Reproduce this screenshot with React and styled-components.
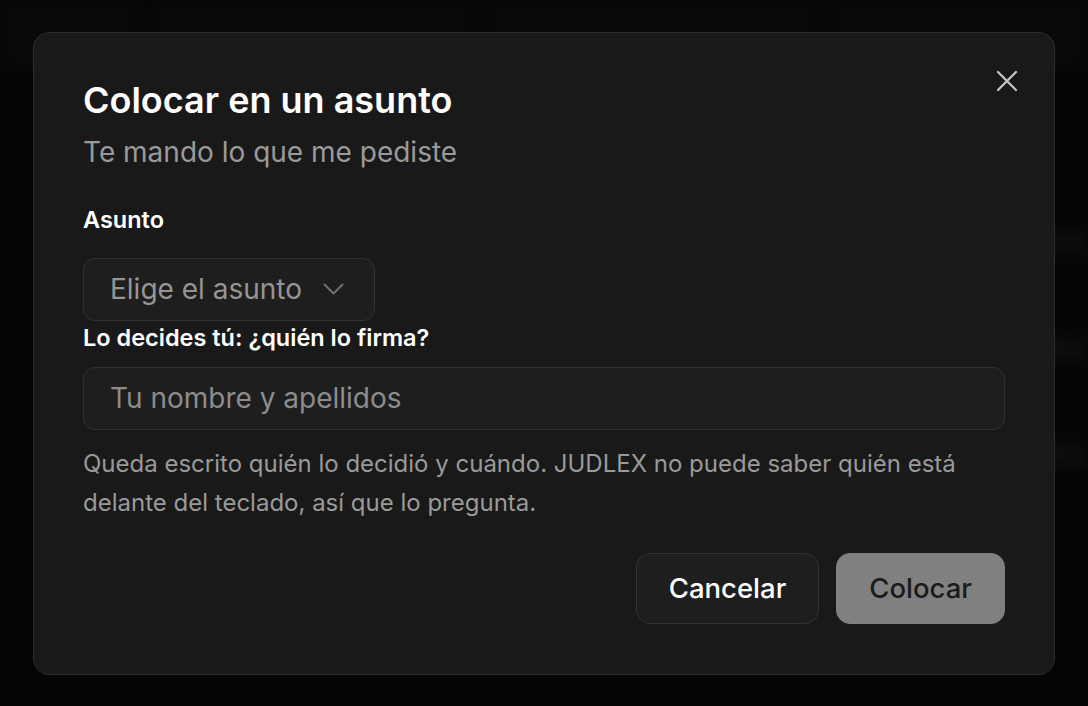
import React from 'react';
import styled, { createGlobalStyle } from 'styled-components';

const GlobalStyle = createGlobalStyle`
  html, body {
    margin: 0;
    padding: 0;
    background: #0a0a0a;
    font-family: Inter, "Noto Sans", sans-serif;
    -webkit-font-smoothing: antialiased;
  }
  * { box-sizing: border-box; }
`;

export default function App() {
  return (
    <>
      <GlobalStyle />
      <Backdrop>
        <BackPage>
          <BackCol />
          <BackCol />
          <BackCol />
          <BackCol />
        </BackPage>
        <BackRows>
          <BackRow><Dot /></BackRow>
          <BackRow><Dot color="#6b2a6b" /></BackRow>
          <BackRow><Dot color="#1f5a3a" /></BackRow>
        </BackRows>
      </Backdrop>
      <Overlay>
        <Dialog>
          <CloseButton aria-label="Cerrar">
            <svg width="22" height="22" viewBox="0 0 22 22" fill="none">
              <path d="M2 2 20 20M20 2 2 20" stroke="#c9c9c9" strokeWidth="2.2" strokeLinecap="round" />
            </svg>
          </CloseButton>
          <Title>Colocar en un asunto</Title>
          <Subtitle>Te mando lo que me pediste</Subtitle>

          <Label>Asunto</Label>
          <SelectButton type="button">
            Elige el asunto
            <svg width="21" height="13" viewBox="0 0 21 13" fill="none">
              <path d="M1.5 1.5 10.5 10.5 19.5 1.5" stroke="#6f6f6f" strokeWidth="2" strokeLinecap="round" strokeLinejoin="round" />
            </svg>
          </SelectButton>

          <Label tight>Lo decides tú: ¿quién lo firma?</Label>
          <TextInput placeholder="Tu nombre y apellidos" />
          <Help>
            Queda escrito quién lo decidió y cuándo. JUDLEX no puede saber quién está
            delante del teclado, así que lo pregunta.
          </Help>

          <Footer>
            <Button>Cancelar</Button>
            <Button primary>Colocar</Button>
          </Footer>
        </Dialog>
      </Overlay>
    </>
  );
}

const Backdrop = styled('div')`
  height: 706px;
  overflow: hidden;
  filter: blur(6px);
  opacity: 0.5;
`;

const BackPage = styled('div')`
  display: grid;
  grid-template-columns: 140px 320px 330px 1fr;
  gap: 14px;
  height: 70px;
`;

const BackCol = styled('div')`
  background: #161616;
`;

const BackRows = styled('div')`
  display: flex;
  flex-direction: column;
  gap: 80px;
  padding: 160px 0 0 1050px;
`;

const BackRow = styled('div')`
  height: 26px;
  width: 60px;
  background: #222;
  border-radius: 6px;
  display: flex;
  align-items: center;
`;

const Dot = styled('span')`
  width: 10px;
  height: 10px;
  border-radius: 50%;
  background: ${p => p.color || 'transparent'};
`;

const Overlay = styled('div')`
  position: fixed;
  inset: 0;
  background: rgba(0, 0, 0, 0.45);
  display: flex;
  align-items: center;
  justify-content: center;
`;

const Dialog = styled('div')`
  position: relative;
  width: 1022px;
  background: #191919;
  border: 1.5px solid #2c2c2c;
  border-radius: 16px;
  padding: 46px 49px 50px;
  display: flex;
  flex-direction: column;
`;

const CloseButton = styled('button')`
  position: absolute;
  top: 37px;
  right: 36px;
  width: 22px;
  height: 22px;
  padding: 0;
  border: none;
  background: none;
  display: flex;
`;

const Title = styled('h2')`
  margin: 0;
  font-size: 36px;
  line-height: 42px;
  font-weight: 600;
  color: #fff;
`;

const Subtitle = styled('p')`
  margin: 13px 0 0;
  font-size: 28px;
  line-height: 36px;
  color: #9a9a9a;
`;

const Label = styled('label')`
  display: block;
  margin: ${p => (p.tight ? '2px 0 14px' : '35px 0 23px')};
  font-size: 23.5px;
  line-height: 30px;
  font-weight: 600;
  color: #fff;
`;

const SelectButton = styled('button')`
  align-self: flex-start;
  display: flex;
  align-items: center;
  gap: 21px;
  height: 63px;
  padding: 0 30px 0 26px;
  background: #1e1e1e;
  border: 1.5px solid #323232;
  border-radius: 12px;
  font-family: inherit;
  font-size: 28px;
  color: #959595;
`;

const TextInput = styled('input')`
  width: 100%;
  height: 63px;
  padding: 0 26px;
  background: #1e1e1e;
  border: 1.5px solid #323232;
  border-radius: 12px;
  font-family: inherit;
  font-size: 28px;
  color: #ddd;
  outline: none;

  &::placeholder {
    color: #8c8c8c;
  }
`;

const Help = styled('p')`
  margin: 14px 0 0;
  font-size: 24px;
  line-height: 39px;
  color: #9a9a9a;
`;

const Footer = styled('div')`
  display: flex;
  justify-content: flex-end;
  gap: 17px;
  margin-top: 31px;
`;

const Button = styled('button')`
  height: 71px;
  padding: 0 32px;
  border-radius: 14px;
  font-family: inherit;
  font-size: 27.5px;
  font-weight: 500;
  border: 1.5px solid ${p => (p.primary ? '#808080' : '#333')};
  background: ${p => (p.primary ? '#808080' : '#1e1e1e')};
  color: ${p => (p.primary ? '#1b1b1b' : '#fff')};
`;
